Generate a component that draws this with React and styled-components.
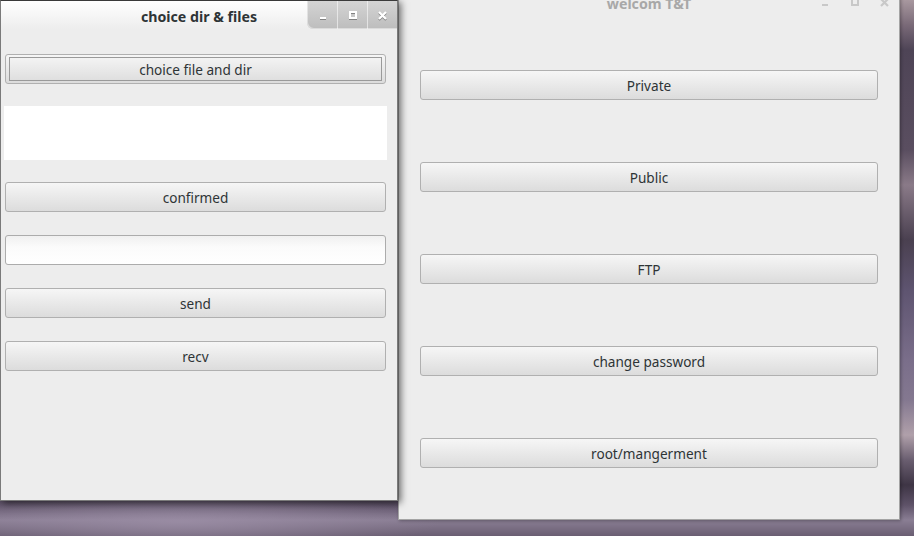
import styled, { createGlobalStyle } from "styled-components";

const Global = createGlobalStyle`
  html, body {
    margin: 0;
    padding: 0;
    overflow: hidden;
  }
  body {
    font-family: "Noto Sans", "DejaVu Sans", sans-serif;
  }
`;

const Desktop = styled.div`
  position: relative;
  width: 914px;
  height: 536px;
  overflow: hidden;
  background:
    radial-gradient(ellipse 260px 30px at 180px 522px, rgba(160, 146, 170, 0.7), transparent),
    linear-gradient(
      180deg,
      #a8989f 0px,
      #7a6a78 25px,
      #4e4456 50px,
      #5a4e60 150px,
      #8a7a88 185px,
      #4a4050 240px,
      #5e5470 290px,
      #7a6e8a 360px,
      #847890 400px,
      #b0a0aa 435px,
      #6a5e70 460px,
      #3e3545 485px,
      #5e5268 505px,
      #8a7e94 520px,
      #6a5e72 536px
    );
`;

const Window = styled.div`
  position: absolute;
  left: ${(p) => p.$left}px;
  top: ${(p) => p.$top}px;
  width: ${(p) => p.$width}px;
  height: ${(p) => p.$height}px;
  box-sizing: border-box;
  background: #ededed;
  border: 1px solid ${(p) => (p.$active ? "#7a7a7a" : "#a4a4a4")};
  border-top-color: ${(p) => (p.$active ? "#3a3a3a" : "#a4a4a4")};
  z-index: ${(p) => (p.$active ? 2 : 1)};
  box-shadow: ${(p) =>
    p.$active ? "3px 2px 7px rgba(0, 0, 0, 0.55)" : "1px 1px 3px rgba(0, 0, 0, 0.3)"};
  display: flex;
  flex-direction: column;
`;

const TitleBar = styled.div`
  height: 28px;
  flex-shrink: 0;
  display: grid;
  grid-template-columns: 1fr auto 1fr;
  align-items: center;
  background: ${(p) =>
    p.$active ? "linear-gradient(180deg, #ffffff 0%, #ededed 100%)" : "#ededed"};
`;

const Title = styled.div`
  grid-column: 2;
  font-size: 14.2px;
  font-weight: 700;
  color: ${(p) => (p.$active ? "#2e3436" : "#a8a8a8")};
  padding-top: 3px;
`;

const Controls = styled.div`
  grid-column: 3;
  justify-self: end;
  align-self: stretch;
  display: flex;
  border-bottom-left-radius: 6px;
  background: ${(p) =>
    p.$active ? "linear-gradient(180deg, #d4d4d4 0%, #bdbdbd 100%)" : "transparent"};
  box-shadow: ${(p) => (p.$active ? "inset 1px -1px 0 rgba(255,255,255,0.45)" : "none")};
`;

const Ctl = styled.div`
  width: 29px;
  display: flex;
  align-items: center;
  justify-content: center;
  border-left: 1px solid ${(p) => (p.$active && !p.$first ? "rgba(255,255,255,0.55)" : "transparent")};
  color: ${(p) => (p.$active ? "#ffffff" : "#c8c8c8")};
  svg {
    filter: ${(p) => (p.$active ? "drop-shadow(0 1px 0 rgba(0,0,0,0.35))" : "none")};
  }
`;

const Body = styled.div`
  display: flex;
  flex-direction: column;
  padding: ${(p) => p.$pad};
`;

const Button = styled.div`
  position: relative;
  height: 30px;
  box-sizing: border-box;
  margin-top: ${(p) => p.$mt || 0}px;
  border: 1px solid #b0b0b0;
  border-radius: 3px;
  background: linear-gradient(180deg, #f6f6f6 0%, #e9e9e9 50%, #dcdcdc 100%);
  display: flex;
  align-items: center;
  justify-content: center;
  padding-top: 1px;
  font-size: 13.6px;
  color: #2e3436;
  ${(p) =>
    p.$focused &&
    `
    &::after {
      content: "";
      position: absolute;
      inset: 2px 3px 2px 3px;
      border: 1px solid #9a9a9a;
    }
  `}
`;

const WhiteArea = styled.div`
  height: 54px;
  margin: ${(p) => p.$mt}px -1px 0 -1px;
  background: #ffffff;
`;

const Entry = styled.div`
  height: 30px;
  box-sizing: border-box;
  margin-top: ${(p) => p.$mt}px;
  border: 1px solid #acacac;
  border-radius: 3px;
  background: linear-gradient(180deg, #f0f0f0 0%, #fbfbfb 40%, #ffffff 100%);
`;

const MinIcon = () => (
  <svg width="8" height="8" viewBox="0 0 8 8">
    <rect x="1" y="6" width="6" height="2" fill="currentColor" />
  </svg>
);

const MaxIcon = () => (
  <svg width="8" height="8" viewBox="0 0 8 8">
    <rect x="1" y="1" width="6" height="6" fill="none" stroke="currentColor" strokeWidth="2" />
  </svg>
);

const CloseIcon = () => (
  <svg width="9" height="9" viewBox="0 0 9 9">
    <path d="M1 1 L8 8 M8 1 L1 8" stroke="currentColor" strokeWidth="2.2" />
  </svg>
);

const WindowControls = ({ active }) => (
  <Controls $active={active}>
    <Ctl $active={active} $first>
      <MinIcon />
    </Ctl>
    <Ctl $active={active}>
      <MaxIcon />
    </Ctl>
    <Ctl $active={active}>
      <CloseIcon />
    </Ctl>
  </Controls>
);

const mainButtons = ["Private", "Public", "FTP", "change password", "root/mangerment"];

export default function App() {
  return (
    <Desktop>
      <Global />

      <Window $left={398} $top={-13} $width={502} $height={533}>
        <TitleBar>
          <Title>welcom T&amp;T</Title>
          <WindowControls active={false} />
        </TitleBar>
        <Body $pad="54px 21px 0 21px">
          {mainButtons.map((label, i) => (
            <Button key={label} $mt={i === 0 ? 0 : 62}>
              {label}
            </Button>
          ))}
        </Body>
      </Window>

      <Window $active $left={0} $top={0} $width={398} $height={501}>
        <TitleBar $active>
          <Title $active>choice dir &amp; files</Title>
          <WindowControls active />
        </TitleBar>
        <Body $pad="25px 11px 0 4px">
          <Button $focused>choice file and dir</Button>
          <WhiteArea $mt={22} />
          <Button $mt={22}>confirmed</Button>
          <Entry $mt={23} />
          <Button $mt={23}>send</Button>
          <Button $mt={23}>recv</Button>
        </Body>
      </Window>
    </Desktop>
  );
}
